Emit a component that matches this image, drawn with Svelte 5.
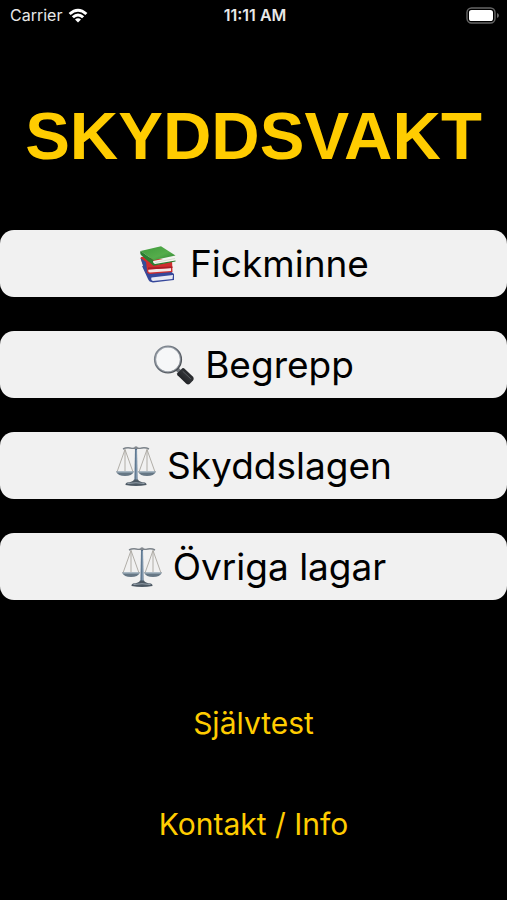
<script lang="ts">
  type Icon = 'books' | 'search' | 'scales';

  /** Main menu entries, shown as large buttons */
  const menu: { icon: Icon; label: string }[] = [
    { icon: 'books', label: 'Fickminne' },
    { icon: 'search', label: 'Begrepp' },
    { icon: 'scales', label: 'Skyddslagen' },
    { icon: 'scales', label: 'Övriga lagar' },
  ];

  /** Secondary entries, shown as plain text buttons */
  const links = ['Självtest', 'Kontakt / Info'];
</script>

<div class="screen">
  <header class="status">
    <div class="carrier">
      <span>Carrier</span>
      <svg class="wifi" viewBox="0 0 20 15" aria-hidden="true">
        <path d="M0.6 4.9 Q10 -3.6 19.4 4.9 L17.4 7 Q10 0.3 2.6 7 Z" />
        <path d="M3.8 8.2 Q10 2.6 16.2 8.2 L14.1 10.3 Q10 6.7 5.9 10.3 Z" />
        <path d="M7 11.5 Q10 8.8 13 11.5 L10 14.6 Z" />
      </svg>
    </div>
    <time>11:11 AM</time>
    <div class="power">
      <svg class="battery" viewBox="0 0 34 17" aria-hidden="true">
        <rect x="1" y="1" width="28" height="15" rx="4.5" fill="none" stroke="#666" stroke-width="1.4" />
        <rect x="3" y="3" width="24" height="11" rx="2.6" fill="#fff" />
        <path d="M31 6 Q33 6.7 33 8.5 Q33 10.3 31 11 Z" fill="#666" />
      </svg>
    </div>
  </header>

  <h1>SKYDDSVAKT</h1>

  <nav class="menu">
    {#each menu as item}
      <button class="card">
        {#if item.icon === 'books'}
          <svg class="icon" viewBox="0 0 42 42" aria-hidden="true">
            <defs>
              <linearGradient id="green-cover" x1="0" y1="0" x2="1" y2="1">
                <stop offset="0" stop-color="#3f9a3c" />
                <stop offset="0.6" stop-color="#55ad4b" />
                <stop offset="1" stop-color="#2f8331" />
              </linearGradient>
            </defs>
            <path d="M4 23 L31 27 L36 31 L36 37 L15 39.5 Q11 39 10 36 Z" fill="#36489b" />
            <path d="M13.5 34.5 L35 32 L34.5 36 L15 38 Q12.5 37 13.5 34.5 Z" fill="#e9eaf4" />
            <path d="M2.5 15 Q3 13 6 14 L34 17 L34.5 29 L12 31 Q8 30.5 7 27 Z" fill="#cf2e2e" />
            <path d="M2.5 15 L8 19 L9.5 31 L6 26 Z" fill="#344e9b" />
            <path d="M10.5 26.5 L33 25 L33 28 L12 29.5 Q9.5 29 10.5 26.5 Z" fill="#f4e8e6" />
            <path d="M10 24.5 L34.5 23.5 L34.5 25 L10 26.5 Z" fill="#a91d26" />
            <path d="M15 18 L37.5 13.5 L37 18 L17 22 Q13.5 21 15 18 Z" fill="#f4f5ee" />
            <path d="M2.6 8 L23 3.3 L37.5 12.5 L15.5 17.2 Z" fill="url(#green-cover)" />
            <path d="M2.6 8 Q1.5 10.5 3.5 12.5 L15.5 22.7 L37.5 18.5 L37.5 17.6 L17 21 Q14 20 15.5 17.2 Z" fill="#2b7f30" />
            <path d="M17 19.5 L37 15.5" stroke="#b9c0b5" stroke-width="0.5" />
          </svg>
        {:else if item.icon === 'search'}
          <svg class="icon" viewBox="0 0 42 42" aria-hidden="true">
            <defs>
              <linearGradient id="rim" x1="0" y1="0" x2="1" y2="1">
                <stop offset="0" stop-color="#899099" />
                <stop offset="0.5" stop-color="#666d76" />
                <stop offset="1" stop-color="#3f4246" />
              </linearGradient>
              <linearGradient id="handle" x1="0" y1="1" x2="1" y2="0">
                <stop offset="0" stop-color="#101113" />
                <stop offset="0.55" stop-color="#303236" />
                <stop offset="1" stop-color="#151618" />
              </linearGradient>
            </defs>
            <path d="M23.5 24.5 L28 29" stroke="#70757b" stroke-width="4" />
            <circle cx="15" cy="15.5" r="13" fill="#f6f7f8" stroke="url(#rim)" stroke-width="2.2" />
            <circle cx="15" cy="15.5" r="12.5" fill="none" stroke="#b9c0c7" stroke-width="0.6" />
            <path d="M24.3 29.3 L29.3 24.3 Q30.3 23.7 31.3 24.5 L40.3 33 Q41.3 35 40 36.6 L36.6 40 Q35 41 33.3 39.8 L24.5 31.3 Q23.6 30.2 24.3 29.3 Z" fill="url(#handle)" />
            <path d="M30 27.5 L37.5 34.5" stroke="#5a5d61" stroke-width="1" stroke-linecap="round" />
          </svg>
        {:else}
          <svg class="icon" viewBox="0 0 42 42" aria-hidden="true">
            <g fill="none" stroke="#a9a69f" stroke-width="0.9">
              <path d="M10 4.5 L2 27 M10 4.5 L18 27 M10 4.5 V26" />
              <path d="M32 4.5 L24 27 M32 4.5 L40 27 M32 4.5 V26" />
            </g>
            <path d="M8 4 Q12 2 17 3.4 L21 3 L25 3.4 Q30 2 34 4" fill="none" stroke="#7b8289" stroke-width="1.4" />
            <circle cx="21" cy="3" r="1.8" fill="#81878d" />
            <path d="M20 4 H22 L22.6 36 H19.4 Z" fill="#58708a" />
            <path d="M21.3 5 V35" stroke="#9eb7cc" stroke-width="0.7" />
            <path d="M1 26.5 H19 Q17 31 10 31 Q3 31 1 26.5 Z" fill="#667785" />
            <path d="M23 26.5 H41 Q39 31 32 31 Q25 31 23 26.5 Z" fill="#667785" />
            <path d="M2 27 H18 M24 27 H40" stroke="#a9bdca" stroke-width="1" />
            <path d="M19 34.5 H23 Q24 37 30 37.5 Q32 38.5 31.5 40 Q21 42 10.5 40 Q10 38.5 12 37.5 Q18 37 19 34.5 Z" fill="#4c5863" />
            <path d="M12.5 38.5 Q21 37 29.5 38.5" fill="none" stroke="#9fabb5" stroke-width="0.9" />
          </svg>
        {/if}
        <span>{item.label}</span>
      </button>
    {/each}
  </nav>

  <div class="links">
    {#each links as label}
      <button class="link">{label}</button>
    {/each}
  </div>
</div>

<style>
  :global(body) {
    margin: 0;
    background: #000;
  }

  .screen {
    display: flex;
    flex-direction: column;
    min-height: 100vh;
    background: #000;
    font-family: Inter, "Liberation Sans", sans-serif;
  }

  .status {
    display: grid;
    grid-template-columns: 1fr auto 1fr;
    align-items: center;
    height: 30px;
    padding: 0 7px 0 10px;
    color: #e8e8e8;
    font-size: 16px;
    line-height: 20px;
  }

  .status time {
    font-weight: 600;
  }

  .carrier {
    display: flex;
    align-items: center;
    gap: 6px;
  }

  .wifi {
    width: 20px;
    height: 15px;
    fill: #fff;
  }

  .power {
    display: flex;
    justify-content: flex-end;
  }

  .battery {
    width: 34px;
    height: 17px;
  }

  h1 {
    margin: 65px 0 53px;
    color: #fc0;
    font-family: "Liberation Sans", Arial, sans-serif;
    font-size: 67px;
    font-weight: 700;
    line-height: 82px;
    text-align: center;
  }

  button {
    border: 0;
    font-family: inherit;
    cursor: pointer;
  }

  .menu,
  .links {
    display: flex;
    flex-direction: column;
    gap: 34px;
  }

  .card {
    display: flex;
    justify-content: center;
    align-items: center;
    gap: 10px;
    height: 67px;
    padding: 0 12px;
    border-radius: 14px;
    background: #f1f1f1;
    color: #000;
    font-size: 37px;
    line-height: 48px;
  }

  .icon {
    width: 42px;
    height: 42px;
  }

  .links {
    align-items: center;
    margin-top: 89px;
  }

  .link {
    height: 67px;
    padding: 0 16px;
    background: none;
    color: #fc0;
    font-size: 30px;
    line-height: 40px;
  }
</style>
